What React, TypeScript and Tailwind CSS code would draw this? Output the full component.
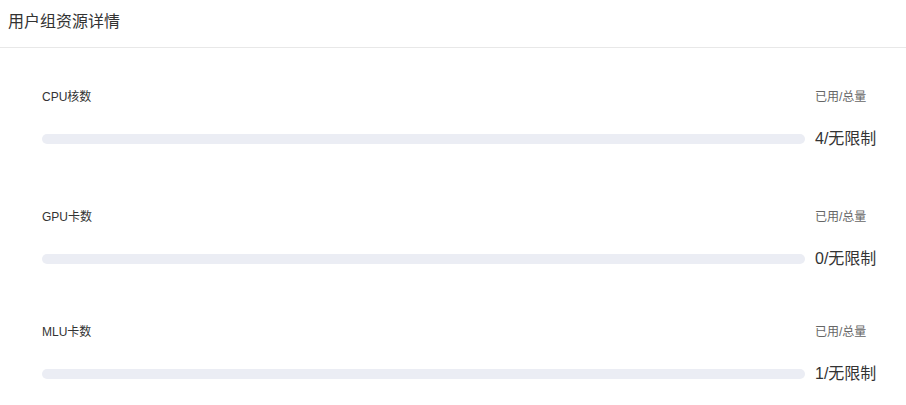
const resources = [
  { name: "CPU核数", used: 4, total: "无限制", mt: "mt-[40px]" },
  { name: "GPU卡数", used: 0, total: "无限制", mt: "mt-[58px]" },
  { name: "MLU卡数", used: 1, total: "无限制", mt: "mt-[53px]" },
];

const ResourceRow = ({
  name,
  used,
  total,
  mt,
}: {
  name: string;
  used: number;
  total: string;
  mt: string;
}) => {
  return (
    <div className={`${mt} flex flex-col`}>
      <div className="flex items-center gap-[10px] text-[12px] leading-[18px]">
        <p className="flex-1 text-[#333]">{name}</p>
        <p className="w-[61px] text-[#666]">已用/总量</p>
      </div>
      <div className="mt-[22px] flex h-[22px] items-center gap-[10px]">
        <div className="h-[10px] flex-1 rounded-full bg-[#ebedf4]">
          <div className="h-full rounded-full bg-[#ebedf4]" style={{ width: "0%" }} />
        </div>
        <p className="w-[61px] whitespace-nowrap text-[16px] leading-[22px] text-[#333]">
          {used}/{total}
        </p>
      </div>
    </div>
  );
};

const App = () => {
  return (
    <div className="h-[405px] w-[906px] bg-white font-['Liberation_Sans','Noto_Sans_CJK_SC',sans-serif]">
      <div className="h-[48px] border-b border-[#e8e8e8] pl-[8px] pt-[10px]">
        <p className="text-[16px] leading-[24px] text-[#333]">用户组资源详情</p>
      </div>
      <div className="flex flex-col pl-[42px] pr-[30px]">
        {resources.map((r) => (
          <ResourceRow key={r.name} {...r} />
        ))}
      </div>
    </div>
  );
};

export default App;
